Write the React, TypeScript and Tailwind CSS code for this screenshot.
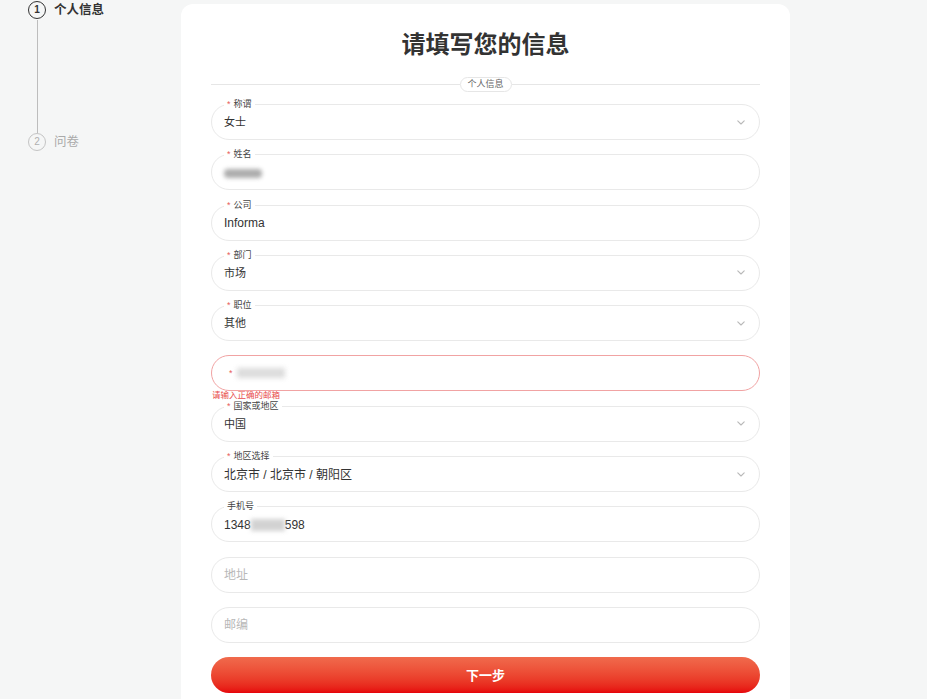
import React from 'react';

// ==========================================
// DATA
// ==========================================

type Field = {
  label?: string;
  required?: boolean;
  value?: React.ReactNode;
  placeholder?: string;
  select?: boolean;
  small?: boolean;
  error?: string;
};

const Blur = ({ w }: { w: number }) => (
  <span
    className="inline-block h-[9px] rounded-sm bg-[#8a8a8a] blur-[2px] align-middle opacity-70"
    style={{ width: w }}
  />
);

const fields: Field[] = [
  { label: '称谓', required: true, value: '女士', select: true, small: true },
  { label: '姓名', required: true, value: <Blur w={38} /> },
  { label: '公司', required: true, value: 'Informa' },
  { label: '部门', required: true, value: '市场', select: true, small: true },
  { label: '职位', required: true, value: '其他', select: true, small: true },
  { required: true, error: '请输入正确的邮箱' },
  { label: '国家或地区', required: true, value: '中国', select: true, small: true },
  { label: '地区选择', required: true, value: '北京市 / 北京市 / 朝阳区', select: true },
  {
    label: '手机号',
    value: (
      <span className="inline-flex items-center">
        1348
        <span className="inline-block h-[12px] w-[34px] bg-[#c8c8c8] blur-[2px] opacity-80" />
        598
      </span>
    ),
  },
  { placeholder: '地址' },
  { placeholder: '邮编' },
];

// ==========================================
// COMPONENTS
// ==========================================

function Chevron() {
  return (
    <svg width="8" height="5" viewBox="0 0 8 5" fill="none" stroke="#b8b8b8" strokeWidth="1.1" strokeLinecap="round" strokeLinejoin="round">
      <polyline points="0.8,0.8 4,4 7.2,0.8" />
    </svg>
  );
}

function FormField({ field }: { field: Field }) {
  const hasError = !!field.error;
  return (
    <div
      className={
        'relative flex h-[36px] items-center rounded-full border bg-white pl-3 pr-[14px] ' +
        (hasError ? 'border-[#f1a3a3]' : 'border-[#e9e9e9]')
      }
    >
      {/* Floating label */}
      {field.label && (
        <span className="absolute left-[12px] top-[-6px] bg-white px-[3px] text-[9px] leading-[11px] text-[#444]">
          {field.required && <span className="mr-[3px] text-[#e85c5c]">*</span>}
          {field.label}
        </span>
      )}

      {hasError ? (
        <span className="flex items-center gap-[4px] pl-[5px] text-[9px] text-[#e85c5c]">
          *
          <span className="inline-block h-[10px] w-[48px] bg-[#cdcdcd] blur-[2.5px] opacity-70" />
        </span>
      ) : field.placeholder ? (
        <span className="text-[12px] text-[#b8b8b8]">{field.placeholder}</span>
      ) : (
        <span className={'pt-[1px] text-[#333] ' + (field.small ? 'text-[11px]' : 'text-[12px]')}>
          {field.value}
        </span>
      )}

      {field.select && (
        <span className="ml-auto flex items-center">
          <Chevron />
        </span>
      )}

      {hasError && (
        <span className="absolute left-0 top-[34px] text-[8.5px] leading-[10px] text-[#e84c4c]">
          {field.error}
        </span>
      )}
    </div>
  );
}

function Stepper() {
  return (
    <div className="flex flex-col pl-[28px] pt-[1px]">
      <div className="flex items-center gap-[8px]">
        <span className="flex h-[18px] w-[18px] items-center justify-center rounded-full border-[1.5px] border-[#333] text-[10px] font-semibold leading-none text-[#333]">
          1
        </span>
        <span className="text-[12.5px] font-bold text-[#333]">个人信息</span>
      </div>
      <div className="ml-[8.5px] h-[113px] w-[1.5px] bg-[#bdbdbd]" />
      <div className="flex items-center gap-[8px]">
        <span className="flex h-[18px] w-[18px] items-center justify-center rounded-full border-[1.5px] border-[#c4c4c4] text-[10px] leading-none text-[#b0b0b0]">
          2
        </span>
        <span className="text-[12.5px] text-[#aaa]">问卷</span>
      </div>
    </div>
  );
}

// ==========================================
// APP
// ==========================================

export default function App() {
  return (
    <div
      className="flex h-[699px] w-[927px] overflow-hidden bg-[#f5f6f6]"
      style={{ fontFamily: '"Liberation Sans", "Noto Sans CJK SC", sans-serif' }}
    >
      {/* Steps */}
      <div className="w-[181px] shrink-0">
        <Stepper />
      </div>

      {/* Form card */}
      <div className="mt-[4px] w-[609px] shrink-0 rounded-t-[12px] bg-white px-[30px] pt-[25px] pb-10">
        <h1 className="text-center text-[24px] font-bold leading-[32px] text-[#333]">请填写您的信息</h1>

        <div className="mt-[16px] flex items-center">
          <div className="h-px flex-1 bg-[#e6e6e6]" />
          <span className="flex h-[15px] items-center rounded-full border border-[#e6e6e6] px-[7px] text-[9px] text-[#666]">
            个人信息
          </span>
          <div className="h-px flex-1 bg-[#e6e6e6]" />
        </div>

        <div className="mt-[12px] flex flex-col gap-[14.3px]">
          {fields.map((f, i) => (
            <FormField key={i} field={f} />
          ))}
          <button className="h-[36px] rounded-full bg-gradient-to-b from-[#f06a4c] to-[#e6000a] text-[13px] font-bold text-white">
            下一步
          </button>
        </div>
      </div>
    </div>
  );
}
